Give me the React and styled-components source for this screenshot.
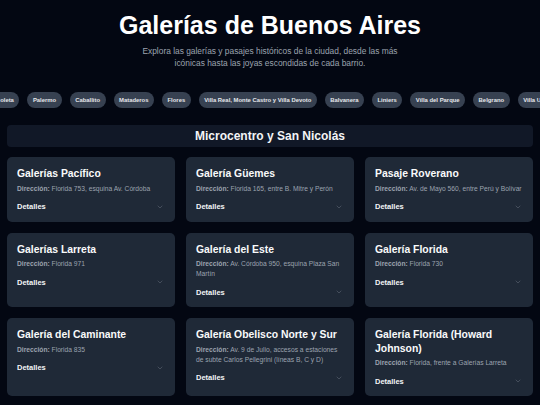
import React, { useLayoutEffect, useRef } from 'react'
import styled, { createGlobalStyle } from 'styled-components'
import { ChevronDown } from 'lucide-react'

const GlobalStyle = createGlobalStyle`
    * { box-sizing: border-box; }
    html, body {
        margin: 0;
        padding: 0;
        background: #030712;
        font-family: "Liberation Sans", Arial, sans-serif;
        color: #f9fafb;
        overflow: hidden;
    }
`

const Page = styled.div`
    padding: 11px 7px 20px;
`

const Hero = styled.header`
    display: flex;
    flex-direction: column;
    align-items: center;
    text-align: center;
`

const Title = styled.h1`
    margin: 0;
    font-size: 25px;
    line-height: 29px;
    font-weight: 700;
    color: #ffffff;
`

const Subtitle = styled.p`
    margin: 5px 0 0;
    max-width: 270px;
    font-size: 8.4px;
    line-height: 12px;
    color: #9ca3af;
`

const PillTrack = styled.nav`
    display: flex;
    gap: 8px;
    margin: 23px -7px 0;
    overflow-x: auto;
    scrollbar-width: none;
    &::-webkit-scrollbar { display: none; }
`

const Pill = styled.button`
    flex-shrink: 0;
    height: 16px;
    padding: 0 5.5px;
    border: none;
    border-radius: 999px;
    background: #374151;
    color: #e5e7eb;
    font-family: inherit;
    font-size: 5.9px;
    font-weight: 700;
    white-space: nowrap;
`

const Section = styled.section`
    margin-top: 17px;
`

const SectionTitle = styled.h2`
    margin: 0 0 10px;
    height: 22px;
    display: flex;
    align-items: center;
    justify-content: center;
    border-radius: 4px;
    background: #111827;
    font-size: 12px;
    font-weight: 700;
    color: #f3f4f6;
`

const Grid = styled.div`
    display: grid;
    grid-template-columns: repeat(3, 1fr);
    column-gap: 11px;
    row-gap: 11px;
`

const Card = styled.article`
    display: flex;
    flex-direction: column;
    padding: 10px 10px 9px;
    border-radius: 5px;
    background: #1f2937;
`

const CardTitle = styled.h3`
    margin: 0 0 3px;
    font-size: 10.4px;
    line-height: 13.5px;
    font-weight: 700;
    color: #f9fafb;
`

const Address = styled.p`
    margin: 0;
    font-size: 6.7px;
    line-height: 10px;
    color: #9ca3af;

    strong { font-weight: 700; }
`

const Details = styled.div`
    display: flex;
    align-items: center;
    justify-content: space-between;
    height: 12px;
    margin-top: 7px;
    font-size: 7.5px;
    font-weight: 700;
    color: #f3f4f6;

    svg { color: #6b7280; margin-right: 1px; }
`

const barrios = [
    'Monserrat', 'San Telmo', 'Recoleta', 'Palermo', 'Caballito', 'Mataderos', 'Flores',
    'Villa Real, Monte Castro y Villa Devoto', 'Balvanera', 'Liniers', 'Villa del Parque',
    'Belgrano', 'Villa Urquiza', 'Núñez', 'Boedo',
]

const galerias = [
    { name: 'Galerías Pacífico', address: 'Florida 753, esquina Av. Córdoba' },
    { name: 'Galería Güemes', address: 'Florida 165, entre B. Mitre y Perón' },
    { name: 'Pasaje Roverano', address: 'Av. de Mayo 560, entre Perú y Bolívar' },
    { name: 'Galerías Larreta', address: 'Florida 971' },
    { name: 'Galería del Este', address: 'Av. Córdoba 950, esquina Plaza San Martín' },
    { name: 'Galería Florida', address: 'Florida 730' },
    { name: 'Galería del Caminante', address: 'Florida 835' },
    { name: 'Galería Obelisco Norte y Sur', address: 'Av. 9 de Julio, accesos a estaciones de subte Carlos Pellegrini (líneas B, C y D)' },
    { name: 'Galería Florida (Howard Johnson)', address: 'Florida, frente a Galerías Larreta' },
]

const App = () => {
    const trackRef = useRef(null)
    const firstRef = useRef(null)

    // scroll the barrio list so "Palermo" sits where the screenshot shows it
    useLayoutEffect(() => {
        if (trackRef.current && firstRef.current) {
            trackRef.current.scrollLeft = firstRef.current.offsetLeft - trackRef.current.offsetLeft - 27
        }
    }, [])

    return (
        <>
            <GlobalStyle />
            <Page>
                <Hero>
                    <Title>Galerías de Buenos Aires</Title>
                    <Subtitle>
                        Explora las galerías y pasajes históricos de la ciudad, desde las más icónicas hasta las joyas escondidas de cada barrio.
                    </Subtitle>
                </Hero>

                <PillTrack ref={trackRef}>
                    {barrios.map(b => (
                        <Pill key={b} ref={b === 'Palermo' ? firstRef : null}>{b}</Pill>
                    ))}
                </PillTrack>

                <Section>
                    <SectionTitle>Microcentro y San Nicolás</SectionTitle>
                    <Grid>
                        {galerias.map(g => (
                            <Card key={g.name}>
                                <CardTitle>{g.name}</CardTitle>
                                <Address><strong>Dirección:</strong> {g.address}</Address>
                                <Details>
                                    Detalles
                                    <ChevronDown size={8} strokeWidth={1.5} />
                                </Details>
                            </Card>
                        ))}
                    </Grid>
                </Section>
            </Page>
        </>
    )
}

export default App
